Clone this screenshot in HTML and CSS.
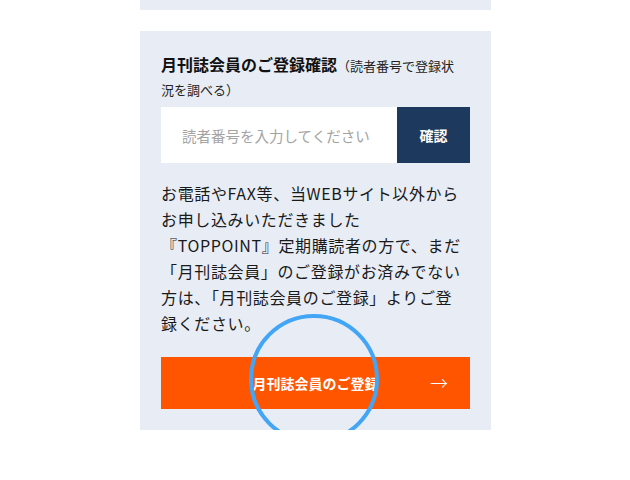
FILE: index.html
```html
<!DOCTYPE html>
<html lang="ja">
<head>
<meta charset="utf-8">
<link rel="stylesheet" href="styles.css">
</head>
<body>
<div class="page">
  <div class="card card-top"></div>
  <div class="card">
    <h2 class="title">月刊誌会員のご登録確認<span class="sub">（読者番号で登録状<br>況を調べる）</span></h2>
    <form class="check">
      <input class="field" type="text" placeholder="読者番号を入力してください">
      <button class="confirm" type="button">確認</button>
    </form>
    <p class="desc">お電話やFAX等、当WEBサイト以外から<br>お申し込みいただきました<br>『TOPPOINT』定期購読者の方で、まだ<br>「月刊誌会員」のご登録がお済みでない<br>方は、「月刊誌会員のご登録」よりご登<br>録ください。</p>
    <a class="register" href="#"><span class="reg-label">月刊誌会員のご登録</span><span class="arrow">→</span><span class="tap"></span></a>
  </div>
</div>
</body>
</html>
```
FILE: styles.css
```css
html, body {
  margin: 0;
  padding: 0;
  background: #ffffff;
}
body {
  font-family: "Noto Sans CJK JP", "Noto Sans", sans-serif;
  color: #1a1a1a;
}
.page {
  width: 351px;
  margin: 0 auto;
  padding-left: 1px;
}
.card {
  background: #e8edf5;
  padding: 21px 21px 21px 21px;
}
.card-top {
  height: 10px;
  padding: 0;
  margin-bottom: 21px;
}
.title {
  margin: 0;
  font-size: 16px;
  font-weight: 700;
  line-height: 24px;
  color: #111;
}
.sub {
  font-size: 13px;
  font-weight: 400;
  line-height: 1;
  color: #222;
}
.check {
  display: flex;
  margin: 7px 0 0;
  height: 56px;
}
.field {
  flex: 1;
  min-width: 0;
  border: 0;
  margin: 0;
  padding: 0 0 0 21px;
  background: #fff;
  font-family: inherit;
  font-size: 14.5px;
  color: #333;
  outline: none;
}
.field::placeholder {
  color: #a3a3a3;
}
.confirm {
  width: 73px;
  border: 0;
  margin: 0;
  padding: 0;
  background: #1d3a5e;
  color: #fff;
  font-family: inherit;
  font-size: 14px;
  font-weight: 700;
}
.desc {
  margin: 17px 0 0;
  font-size: 16px;
  line-height: 26px;
  letter-spacing: 0.04em;
  color: #1a1a1a;
  white-space: nowrap;
}
.register {
  position: relative;
  display: flex;
  align-items: center;
  justify-content: center;
  height: 52px;
  margin-top: 21px;
  background: #ff5500;
  color: #fff;
  text-decoration: none;
  font-size: 14px;
  font-weight: 700;
}
.arrow {
  position: absolute;
  right: 22px;
  top: 50%;
  transform: translateY(-52%);
  font-weight: 300;
  font-size: 18px;
}
.tap {
  position: absolute;
  left: 88px;
  top: -43px;
  width: 122px;
  height: 122px;
  border: 4px solid #42a5f5;
  border-radius: 50%;
  pointer-events: none;
}
```
